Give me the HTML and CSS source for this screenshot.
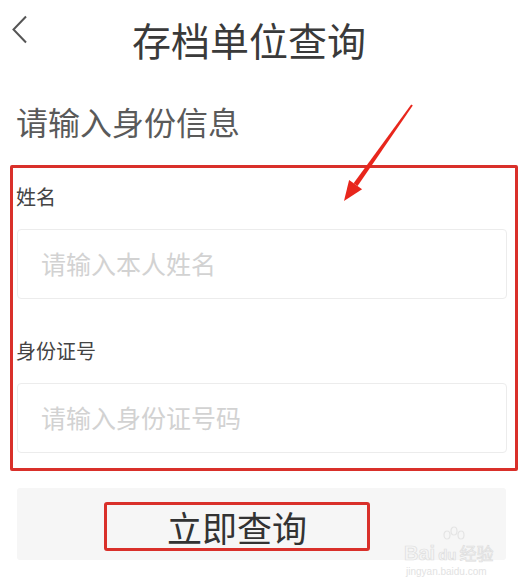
FILE: index.html
```html
<!DOCTYPE html>
<html lang="zh-CN">
<head>
<meta charset="utf-8">
<title>存档单位查询</title>
<link rel="stylesheet" href="styles.css">
</head>
<body>
<div class="page">
  <header class="header">
    <svg class="back" width="17" height="29" viewBox="0 0 17 29" aria-hidden="true">
      <polyline points="15,1.5 2.5,14.5 15,27.5" fill="none" stroke="#555" stroke-width="2"/>
    </svg>
    <h1 class="title">存档单位查询</h1>
  </header>

  <h2 class="heading">请输入身份信息</h2>

  <form class="form">
    <label class="label" for="name">姓名</label>
    <input class="field" id="name" type="text" placeholder="请输入本人姓名">
    <label class="label label-second" for="idno">身份证号</label>
    <input class="field" id="idno" type="text" placeholder="请输入身份证号码">
  </form>

  <div class="submit">
    <button class="submit-btn" type="button">立即查询</button>
  </div>

  <svg class="arrow" width="530" height="585" viewBox="0 0 530 585" aria-hidden="true">
    <polygon points="412.8,105.6 411.2,104.4 353.6,183.3 357.6,186.1" fill="#e8261c"/>
    <polygon points="344,201 349.1,180.1 362.1,189.3" fill="#e8261c"/>
  </svg>

  <div class="watermark" aria-hidden="true">
    <svg class="paw" width="30" height="24" viewBox="0 0 30 24">
      <g fill="none" stroke="#e4e4e4" stroke-width="1.2">
        <ellipse cx="9" cy="9" rx="3" ry="4"/>
        <ellipse cx="16" cy="5" rx="3" ry="4"/>
        <ellipse cx="23" cy="9" rx="3" ry="4"/>
      </g>
    </svg>
    <div class="wm-main"><span>Bai</span><span class="wm-du">du</span><span class="wm-cn">经验</span></div>
    <div class="wm-url">jingyan.baidu.com</div>
  </div>
</div>
</body>
</html>
```

FILE: styles.css
```css
* {
  box-sizing: border-box;
}

html, body {
  margin: 0;
  padding: 0;
  background: #ffffff;
}

body {
  font-family: "Noto Sans CJK SC", "Noto Sans", sans-serif;
  color: #333;
}

.page {
  position: relative;
  width: 530px;
  height: 585px;
  overflow: hidden;
}

.header {
  display: flex;
  align-items: flex-start;
  height: 86px;
  padding: 15px 0 0 11px;
}

.back {
  flex: none;
  display: block;
}

.title {
  margin: 5px 0 0 104px;
  font-size: 39px;
  line-height: 1;
  font-weight: 400;
  color: #3a3a3a;
}

.heading {
  margin: 19px 0 0 16px;
  font-size: 32px;
  line-height: 1;
  font-weight: 400;
  color: #5a5a5a;
}

.form {
  display: flex;
  flex-direction: column;
  margin: 28px 12px 0 10px;
  padding: 19px 8px 15px 4px;
  border: 3px solid #d9302a;
  border-radius: 2px;
}

.label {
  display: block;
  font-size: 20px;
  line-height: 20px;
  color: #444;
  margin-left: -1px;
}

.label-second {
  margin-top: 42px;
}

.field {
  display: block;
  width: 100%;
  height: 70px;
  margin-top: 22px;
  padding: 0 23px 3px;
  border: 1px solid #ececec;
  border-radius: 4px;
  background: #fff;
  font-family: inherit;
  font-size: 25px;
  color: #333;
  outline: none;
}

.field::placeholder {
  color: #d2d2d2;
}

.submit {
  display: flex;
  align-items: flex-start;
  width: 489px;
  height: 72px;
  margin: 17px 0 0 17px;
  padding: 14px 0 0 87px;
  background: #f6f6f6;
  border-radius: 3px;
}

.submit-btn {
  width: 266px;
  height: 49px;
  padding: 0;
  border: 3px solid #d9302a;
  border-radius: 3px;
  background: transparent;
  font-family: inherit;
  font-size: 35px;
  line-height: 1;
  color: #333;
}

.arrow {
  position: absolute;
  left: 0;
  top: 0;
  pointer-events: none;
}

.watermark {
  position: absolute;
  left: 404px;
  top: 526px;
  width: 100px;
  pointer-events: none;
}

.paw {
  display: block;
  margin-left: 34px;
}

.wm-main {
  display: flex;
  align-items: baseline;
  margin-top: -8px;
  font-family: "Liberation Sans", sans-serif;
  font-size: 20px;
  line-height: 22px;
  font-weight: 700;
  color: #f5f5f5;
  -webkit-text-stroke: 0.7px #dedede;
  white-space: nowrap;
}

.wm-du {
  font-size: 15px;
  margin-left: 3px;
}

.wm-cn {
  font-family: "Noto Sans CJK SC", sans-serif;
  font-size: 17px;
  font-weight: 400;
  margin-left: 3px;
}

.wm-url {
  font-family: "Liberation Sans", sans-serif;
  font-size: 10px;
  line-height: 12px;
  color: #e2e2e2;
  white-space: nowrap;
  margin-left: 2px;
}
```
